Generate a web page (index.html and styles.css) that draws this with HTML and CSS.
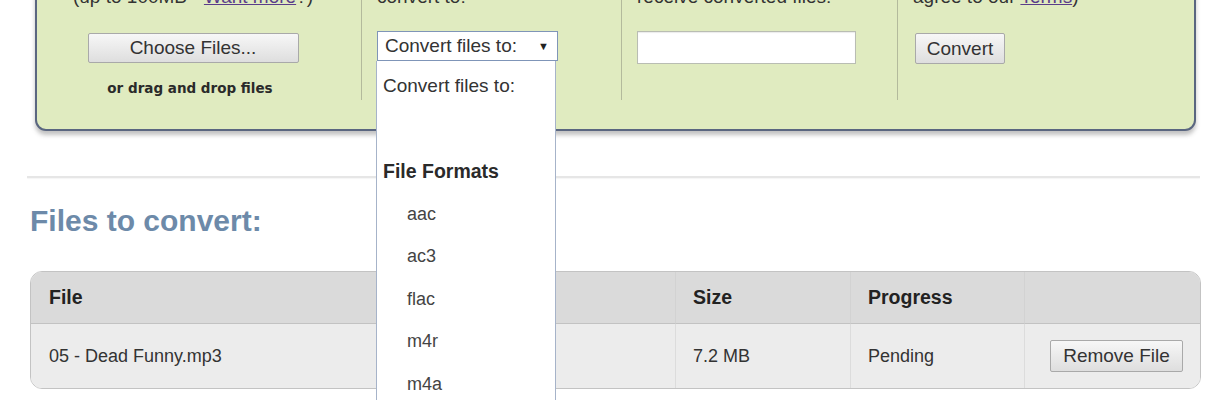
FILE: index.html
```html
<!DOCTYPE html>
<html>
<head>
<meta charset="utf-8">
<link rel="stylesheet" href="styles.css">
</head>
<body>
<div class="page">
  <div class="panel">
    <div class="col col-files">
      <div class="label">(up to 100MB - <a href="#" class="link">Want more</a>?)</div>
      <button class="btn btn-choose">Choose Files...</button>
      <div class="drag">or drag and drop files</div>
    </div>
    <div class="col col-format">
      <div class="label">convert to:</div>
      <div class="select-wrap">
        <div class="select"><span>Convert files to:</span><span class="arrow">▼</span></div>
        <div class="dropdown">
          <div class="opt">Convert files to:</div>
          <div class="opt"></div>
          <div class="opt group">File Formats</div>
          <div class="opt sub">aac</div>
          <div class="opt sub">ac3</div>
          <div class="opt sub">flac</div>
          <div class="opt sub">m4r</div>
          <div class="opt sub">m4a</div>
        </div>
      </div>
    </div>
    <div class="col col-email">
      <div class="label">receive converted files:</div>
      <div class="input"></div>
    </div>
    <div class="col col-go">
      <div class="label">agree to our <a href="#" class="link">Terms</a>)</div>
      <button class="btn btn-convert">Convert</button>
    </div>
  </div>

  <div class="rule"></div>

  <h2 class="heading">Files to convert:</h2>

  <div class="table">
    <div class="cell head first">File</div>
    <div class="cell head">Size</div>
    <div class="cell head">Progress</div>
    <div class="cell head last"></div>
    <div class="cell body first">05 - Dead Funny.mp3</div>
    <div class="cell body">7.2 MB</div>
    <div class="cell body">Pending</div>
    <div class="cell body last"><button class="btn btn-remove">Remove File</button></div>
  </div>
</div>
</body>
</html>
```

FILE: styles.css
```css
* { box-sizing: border-box; }
html, body { margin: 0; padding: 0; background: #ffffff; }
body {
  font-family: "Liberation Sans", Arial, sans-serif;
  color: #2b2b2b;
  width: 1230px;
  height: 400px;
  overflow: hidden;
}
.page { display: flex; flex-direction: column; }

.panel {
  margin-top: -40px;
  margin-left: 35px;
  width: 1161px;
  display: flex;
  background: #e0ebc0;
  border: 2px solid #5a6680;
  border-radius: 11px;
  box-shadow: 0 4px 4px rgba(80, 80, 80, 0.35);
  padding-bottom: 29px;
}
.col {
  min-height: 138px;
  padding-top: 24px;
  display: flex;
  flex-direction: column;
  align-items: flex-start;
}
.col + .col { border-left: 1px solid #b3ba9c; }
.col-files { width: 324px; align-items: center; padding-right: 12px; }
.col-format { width: 260px; padding-left: 15px; }
.col-email { width: 276px; padding-left: 15px; }
.col-go { flex: 1; padding-left: 15px; }

.label {
  font-size: 19px;
  line-height: 22px;
  height: 22px;
  white-space: nowrap;
  color: #333;
}
.link { color: #5a3d8a; text-decoration: underline; }

.btn {
  font-family: "Liberation Sans", Arial, sans-serif;
  font-size: 19px;
  color: #333;
  background: linear-gradient(#f7f7f7, #dedede);
  border: 1px solid #a9a9a9;
  border-radius: 2px;
  padding: 0;
}
.btn-choose { margin-top: 25px; width: 211px; height: 30px; }
.btn-convert { margin-top: 25px; width: 90px; height: 31px; margin-left: 2px; }

.drag {
  margin-top: 17px;
  margin-left: -6px;
  font-family: "DejaVu Sans", Verdana, sans-serif;
  font-weight: bold;
  font-size: 13.5px;
  line-height: 16px;
  color: #2a2a2a;
}

.select-wrap { margin-top: 23px; position: relative; }
.select {
  width: 181px;
  height: 30px;
  background: #fff;
  border: 1px solid #7f95b8;
  display: flex;
  align-items: center;
  justify-content: space-between;
  padding: 0 8px 0 7px;
  font-size: 19px;
  color: #333;
}
.arrow { font-size: 11px; color: #222; }
.dropdown {
  position: absolute;
  left: -1px;
  top: 30px;
  width: 180px;
  height: 339px;
  overflow: hidden;
  background: #fff;
  border: 1px solid #a6b3c9;
  border-top: none;
  border-bottom: none;
  padding-top: 4px;
  z-index: 5;
}
.opt {
  height: 42.5px;
  line-height: 42.5px;
  font-size: 19px;
  padding-left: 6px;
  color: #333;
  white-space: nowrap;
}
.opt.group { font-weight: bold; font-size: 19.5px; color: #2a2a2a; }
.opt.sub { padding-left: 30px; font-size: 18px; color: #444; }

.input {
  margin-top: 23px;
  width: 219px;
  height: 33px;
  background: #fff;
  border: 1px solid #b9bdb3;
  box-shadow: inset 0 1px 1px rgba(0,0,0,0.08);
}

.rule {
  margin-top: 45px;
  margin-left: 27px;
  width: 1173px;
  height: 2px;
  background: #e6e6e6;
  box-shadow: 0 1px 1px rgba(0,0,0,0.04);
}

.heading {
  margin: 26px 0 0 30px;
  font-size: 30px;
  line-height: 34px;
  font-weight: bold;
  color: #6d8aa9;
}

.table {
  margin-top: 33px;
  margin-left: 30px;
  width: 1171px;
  display: grid;
  grid-template-columns: 644px 175px 174px 1fr;
  grid-template-rows: 52px 64px;
  border: 1px solid #c3c3c3;
  border-radius: 12px;
  overflow: hidden;
}
.cell {
  display: flex;
  align-items: center;
  padding-left: 17px;
  font-size: 18px;
  color: #333;
  border-left: 1px solid #d2d2d2;
}
.cell.first { border-left: none; padding-left: 18px; }
.cell.head {
  background: #dadada;
  font-weight: bold;
  font-size: 19.5px;
  color: #222;
  border-bottom: 1px solid #c2c2c2;
}
.cell.body { background: #ececec; border-left-color: #dcdcdc; }
.cell.last { padding-left: 25px; }
.btn-remove { width: 133px; height: 32px; margin-top: 0; }
```
